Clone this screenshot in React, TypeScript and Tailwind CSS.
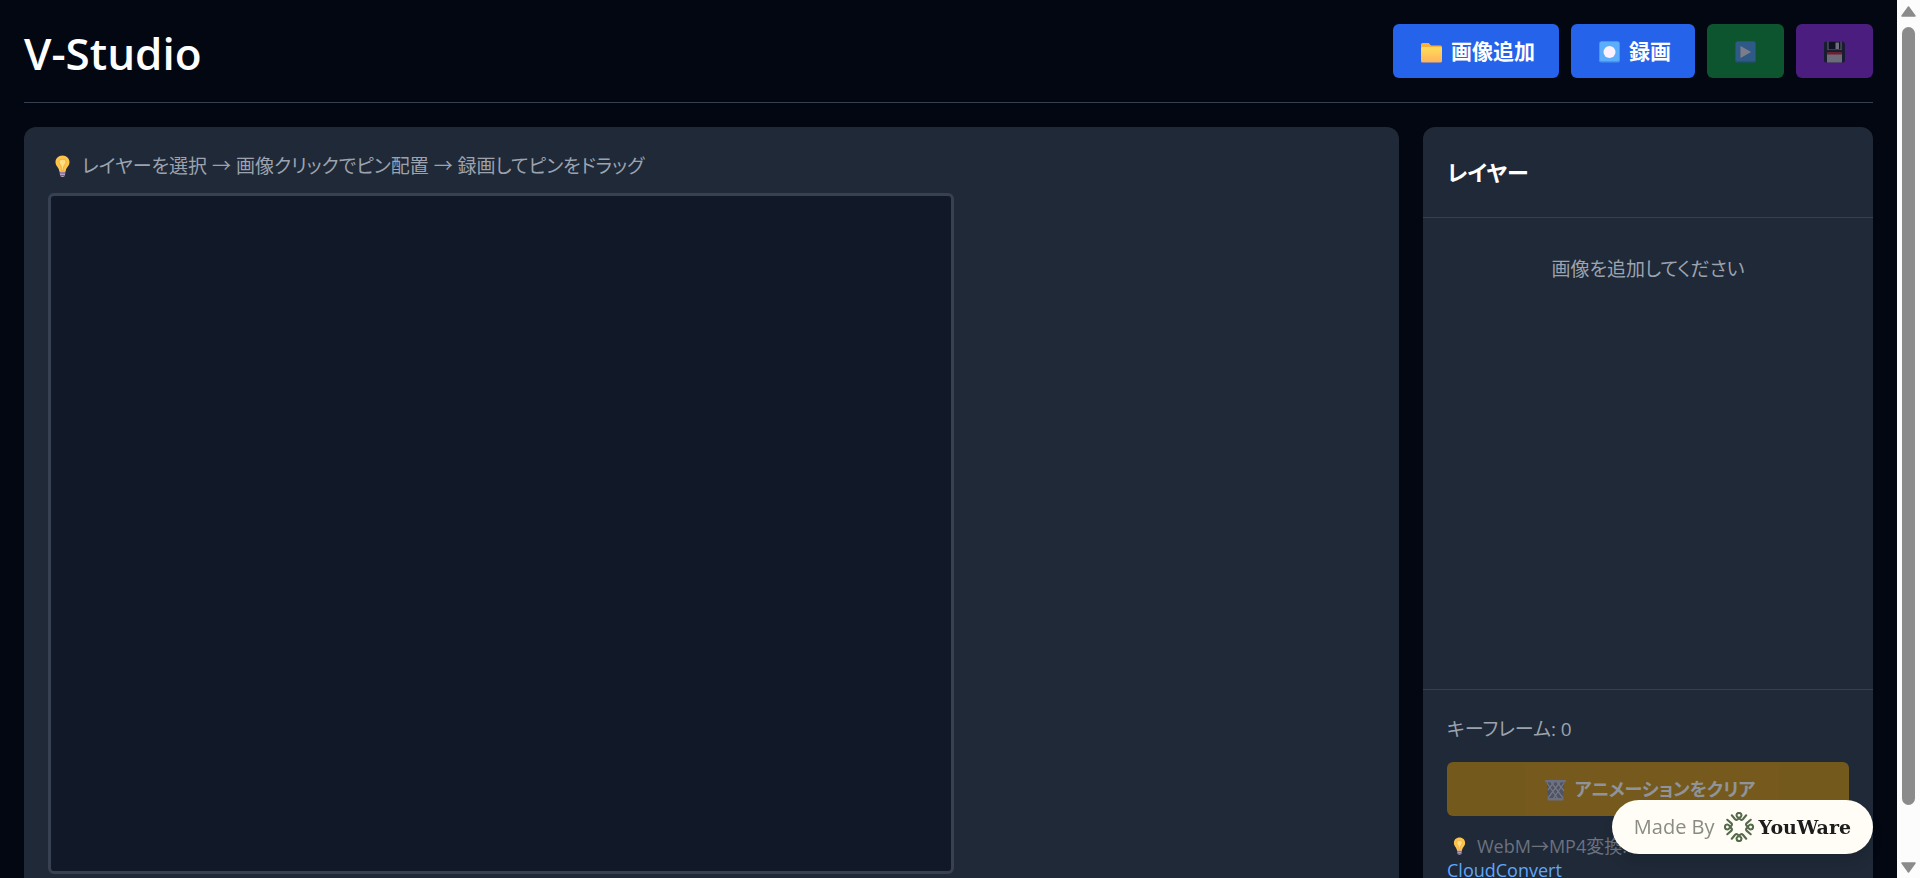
import type { ReactNode } from 'react';

const BASE = "font-['Open_Sans','Noto_Sans_CJK_JP',sans-serif]";

function Bulb({ className }: { className: string }) {
  return (
    <svg viewBox="0 0 29 30" className={className} aria-hidden="true">
      <path d="M11.500 19h6l-.6 6q-2.400 2-4.800 0z" fill="#b9a3c4" />
      <path d="M11.700 22h5.600M12.100 24.500h4.800" stroke="#6f5a86" strokeWidth="1" />
      <path d="M14.500 4.500c-4.200 0-7 3-7 6.600 0 4.100 3.400 5.400 3.900 9.400h6.200c.5-4 3.900-5.300 3.900-9.400 0-3.600-2.800-6.600-7-6.600z" fill="#fcc44a" />
      <path d="M11 10.500c0-3 7-3 7 0s-2.500 2.500-2.800 9h-1.400c-.3-6.500-2.800-6-2.800-9z" fill="#ffdf80" stroke="#f2a33a" strokeWidth=".8" />
    </svg>
  );
}

function FolderIcon() {
  return (
    <svg viewBox="0 0 29 30" className="h-[30px] w-[29px] shrink-0" aria-hidden="true">
      <defs>
        <linearGradient id="folder" x1="0" y1="0" x2="0" y2="1">
          <stop offset="0" stopColor="#ffdd59" />
          <stop offset="1" stopColor="#ffb25c" />
        </linearGradient>
      </defs>
      <path d="M4 8.500A1.500 1.500 0 0 1 5.500 7h6.200l2.300 2.500h9.500A1.500 1.500 0 0 1 25 11V15H4z" fill="#fbb13c" />
      <rect x="4" y="11" width="21" height="15.500" rx="1.500" fill="url(#folder)" />
    </svg>
  );
}

function KeyIcon({ children }: { children: ReactNode }) {
  return (
    <svg viewBox="0 0 29 30" className="h-[30px] w-[29px] shrink-0" aria-hidden="true">
      <rect x="4" y="5.500" width="21" height="21" rx="2" fill="#4a94ec" />
      <rect x="5" y="5.500" width="19" height="19.500" rx="1.500" fill="#5cadfb" />
      {children}
    </svg>
  );
}

function DiskIcon() {
  return (
    <svg viewBox="0 0 29 30" className="h-[30px] w-[29px] shrink-0" aria-hidden="true">
      <path d="M4 7.500a2 2 0 0 1 2-2h17l2 2v17a2 2 0 0 1-2 2H6a2 2 0 0 1-2-2z" fill="#2f3352" />
      <rect x="7.500" y="5.500" width="14" height="8.500" fill="#c9c4dd" />
      <rect x="8.500" y="5.500" width="12" height="8" fill="#1d1d36" />
      <rect x="15.500" y="6.500" width="3.500" height="6.500" fill="#d9d4ea" />
      <rect x="7" y="16" width="15" height="10.500" fill="#d6cfe2" />
      <rect x="7" y="16" width="15" height="2.500" fill="#d33a4c" />
    </svg>
  );
}

function TrashIcon() {
  return (
    <svg viewBox="0 0 29 30" className="h-[30px] w-[29px] shrink-0" aria-hidden="true">
      <path d="M5.500 7.500h18L21.500 25h-14z" fill="#807b8c" />
      <path d="M6 9l11 16M10 8l12 16M16 8l7 9M23 9L12 25M19 8L7 24M13 8l-6 8" stroke="#c6c4d2" strokeWidth="1.300" fill="none" />
      <rect x="4" y="6" width="21" height="2.500" rx="1" fill="#b6b4cc" />
      <rect x="6.500" y="24" width="16" height="2.500" rx="1" fill="#b6b4cc" />
    </svg>
  );
}

function YouWareLogo() {
  return (
    <svg viewBox="-15 -15 30 30" className="size-[30px] shrink-0" fill="none" stroke="#566b4c" strokeWidth="2.100" strokeLinecap="round" strokeLinejoin="round" aria-hidden="true">
      {[0, 90, 180, 270].map((a) => (
        <path
          key={a}
          transform={`rotate(${a})`}
          d="M-7.200-11.700L-3.900-7.800Q-2.600-6.500-1.500-7.500C-.2-8.700 2.500-10 2.500-11.600A2.500 2.500 0 1 0-2.500-11.600C-2.500-10 .2-8.700 1.500-7.500Q2.600-6.500 3.900-7.800L7.200-11.700"
        />
      ))}
    </svg>
  );
}

const BUTTON = 'flex items-center justify-center gap-[5px] rounded-[6px] px-6 py-3 leading-[30px] font-bold text-white';
const BODY = 'text-[19px] leading-[30px] text-[#9ca3af]';

export default function App() {
  return (
    <div className={`${BASE} flex h-screen overflow-hidden bg-[#030712] text-white [font-feature-settings:'palt']`}>
      <div className="min-w-0 flex-1 overflow-hidden p-6">
        <header className="mb-6 flex items-end justify-between border-b border-[#374151] pb-6">
          <h1 className="text-[44px] leading-[50px] font-semibold">V-Studio</h1>
          <div className="flex gap-3">
            <button type="button" className={`${BUTTON} bg-[#2563eb] text-[21px]`}>
              <FolderIcon />
              画像追加
            </button>
            <button type="button" className={`${BUTTON} bg-[#2563eb] text-[21px]`}>
              <KeyIcon>
                <circle cx="14.500" cy="16" r="6" fill="#fbf1ff" />
              </KeyIcon>
              録画
            </button>
            <button type="button" disabled aria-label="再生" className={`${BUTTON} bg-[#16a34a] opacity-50`}>
              <KeyIcon>
                <path d="M9.500 10v12L20 16z" fill="#fbf1ff" />
              </KeyIcon>
            </button>
            <button type="button" disabled aria-label="保存" className={`${BUTTON} bg-[#9333ea] opacity-50`}>
              <DiskIcon />
            </button>
          </div>
        </header>

        <div className="flex gap-6">
          <main className="min-w-0 flex-1 rounded-[12px] bg-[#1f2937] p-6">
            <p className={`${BODY} mb-3 flex items-center gap-[5px]`}>
              <Bulb className="h-[30px] w-[29px] shrink-0" />
              レイヤーを選択 → 画像クリックでピン配置 → 録画してピンをドラッグ
            </p>
            <div className="h-[681px] w-full max-w-[906px] rounded-[6px] border-3 border-[#374151] bg-[#111827]" />
          </main>

          <aside className="flex w-[450px] shrink-0 flex-col rounded-[12px] bg-[#1f2937]">
            <h2 className="border-b border-[#374151] p-6 text-[22px] leading-[42px] font-bold">レイヤー</h2>
            <div className="min-h-[471px] flex-1 px-3 py-9">
              <p className={`${BODY} text-center`}>画像を追加してください</p>
            </div>
            <div className="border-t border-[#374151] p-6">
              <p className={`${BODY} mb-[18px]`}>キーフレーム: 0</p>
              <button type="button" disabled className={`${BUTTON} w-full bg-[#ca8a04] text-[18px] opacity-50`}>
                <TrashIcon />
                アニメーションをクリア
              </button>
              <div className="mt-[18px] text-[18px] leading-6 text-[#6b7280]">
                <p className="flex items-center gap-[5px]">
                  <Bulb className="h-6 w-[25px] shrink-0" />
                  WebM→MP4変換:
                </p>
                <a href="#cloudconvert" className="text-[#60a5fa]">CloudConvert</a>
              </div>
            </div>
          </aside>
        </div>
      </div>

      <a
        href="#youware"
        className="fixed right-[47px] bottom-6 flex h-[54px] items-center rounded-full bg-[#fffdf5] px-[22px] text-[20px] leading-[30px] text-[#8b8b86] shadow-lg"
      >
        Made By
        <span className="ml-[9px] flex items-center gap-[5px] font-['DejaVu_Serif',serif] text-[19px] font-bold text-[#1c1c1c]">
          <YouWareLogo />
          YouWare
        </span>
      </a>

      <div className="flex w-[23px] shrink-0 flex-col items-center bg-[#fcfcfc] pt-[6px] pb-[5px]" aria-hidden="true">
        <svg viewBox="0 0 15 11" className="h-[11px] w-[15px]">
          <path d="M7.500 1L14 10H1z" fill="#8b8b8b" stroke="#8b8b8b" strokeWidth="1.500" strokeLinejoin="round" />
        </svg>
        <div className="mt-[10px] mb-[57px] w-[13px] flex-1 rounded-full bg-[#8b8b8b]" />
        <svg viewBox="0 0 15 11" className="h-[11px] w-[15px]">
          <path d="M7.500 10L14 1H1z" fill="#8b8b8b" stroke="#8b8b8b" strokeWidth="1.500" strokeLinejoin="round" />
        </svg>
      </div>
    </div>
  );
}
